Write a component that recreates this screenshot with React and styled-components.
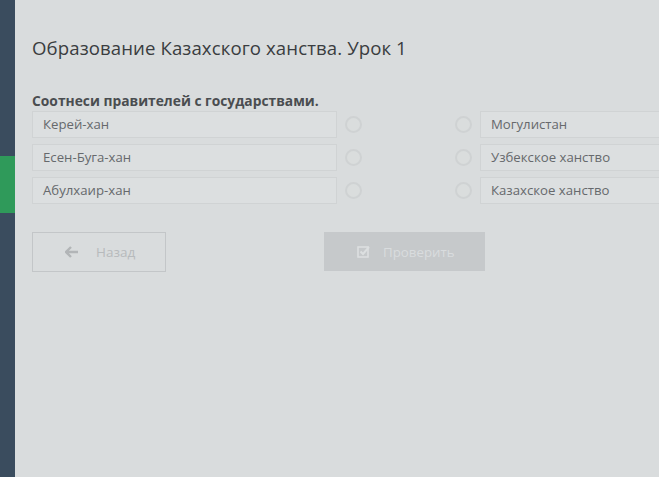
import React from "react";
import styled, { createGlobalStyle } from "styled-components";

const Global = createGlobalStyle`
  body {
    margin: 0;
    background: #d9dcdd;
    font-family: "Open Sans", "Liberation Sans", sans-serif;
  }
`;

const Page = styled.div`
  display: flex;
  height: 477px;
  width: 659px;
  overflow: hidden;
  background: #d9dcdd;
`;

const Sidebar = styled.div`
  width: 15px;
  flex-shrink: 0;
  background: #3a4c5e;
  display: flex;
  flex-direction: column;
`;

const SideBlock = styled.div`
  height: ${(p) => p.h}px;
  background: ${(p) => (p.active ? "#2f9a5a" : "transparent")};
`;

const Main = styled.div`
  flex: 1;
  padding: 35px 0 0 17px;
`;

const Title = styled.h1`
  margin: 0;
  font-size: 18.6px;
  font-weight: 400;
  color: #3a3d40;
  letter-spacing: 0.1px;
`;

const Prompt = styled.div`
  margin-top: 31px;
  font-size: 13.8px;
  font-weight: 700;
  color: #4a4d50;
`;

const Grid = styled.div`
  margin-top: 1px;
  display: flex;
  flex-direction: column;
  gap: 6px;
`;

const Row = styled.div`
  display: flex;
  align-items: center;
`;

const Box = styled.div`
  height: 27px;
  width: ${(p) => p.w}px;
  flex-shrink: 0;
  box-sizing: border-box;
  border: 1px solid #d0d3d4;
  background: #dcdfe0;
  padding-left: 10px;
  padding-bottom: 2px;
  margin-left: ${(p) => p.ml || 0}px;
  display: flex;
  align-items: center;
  font-size: 13.2px;
  color: #66696c;
`;

const Radio = styled.div`
  width: 17px;
  height: 17px;
  box-sizing: border-box;
  border-radius: 50%;
  border: 2px solid #cfd2d3;
  background: #dadddd;
  margin-left: ${(p) => p.ml}px;
  flex-shrink: 0;
`;

const Actions = styled.div`
  margin-top: 28px;
  display: flex;
  gap: 158px;
`;

const BackBtn = styled.div`
  width: 134px;
  height: 40px;
  box-sizing: border-box;
  border: 1px solid #c3c6c8;
  display: flex;
  align-items: center;
  padding-left: 32px;
  gap: 17px;
  font-size: 13.5px;
  color: #b7babc;
`;

const CheckBtn = styled.div`
  width: 161px;
  height: 39px;
  background: #c6c9cb;
  display: flex;
  align-items: center;
  padding-left: 33px;
  box-sizing: border-box;
  gap: 13px;
  font-size: 13.3px;
  color: #d9dcde;
`;

const left = ["Керей-хан", "Есен-Буга-хан", "Абулхаир-хан"];
const right = ["Могулистан", "Узбекское ханство", "Казахское ханство"];

export default function App() {
  return (
    <Page>
      <Global />
      <Sidebar>
        <SideBlock h={156} />
        <SideBlock h={57} active />
      </Sidebar>
      <Main>
        <Title>Образование Казахского ханства. Урок 1</Title>
        <Prompt>Соотнеси правителей с государствами.</Prompt>
        <Grid>
          {left.map((l, i) => (
            <Row key={l}>
              <Box w={305}>{l}</Box>
              <Radio ml={8} />
              <Radio ml={93} />
              <Box w={200} ml={8}>{right[i]}</Box>
            </Row>
          ))}
        </Grid>
        <Actions>
          <BackBtn>
            <svg width="14" height="12" viewBox="0 0 14 12">
              <path d="M6 1 L1 6 L6 11 M1 6 H13" stroke="#b2b5b7" strokeWidth="2.4" fill="none" />
            </svg>
            Назад
          </BackBtn>
          <CheckBtn>
            <svg width="13" height="13" viewBox="0 0 13 13">
              <rect x="1" y="2" width="10" height="10" stroke="#dcdfe0" strokeWidth="1.6" fill="none" />
              <path d="M3.5 6.5 L6 9 L12 2" stroke="#dcdfe0" strokeWidth="2" fill="none" />
            </svg>
            Проверить
          </CheckBtn>
        </Actions>
      </Main>
    </Page>
  );
}
